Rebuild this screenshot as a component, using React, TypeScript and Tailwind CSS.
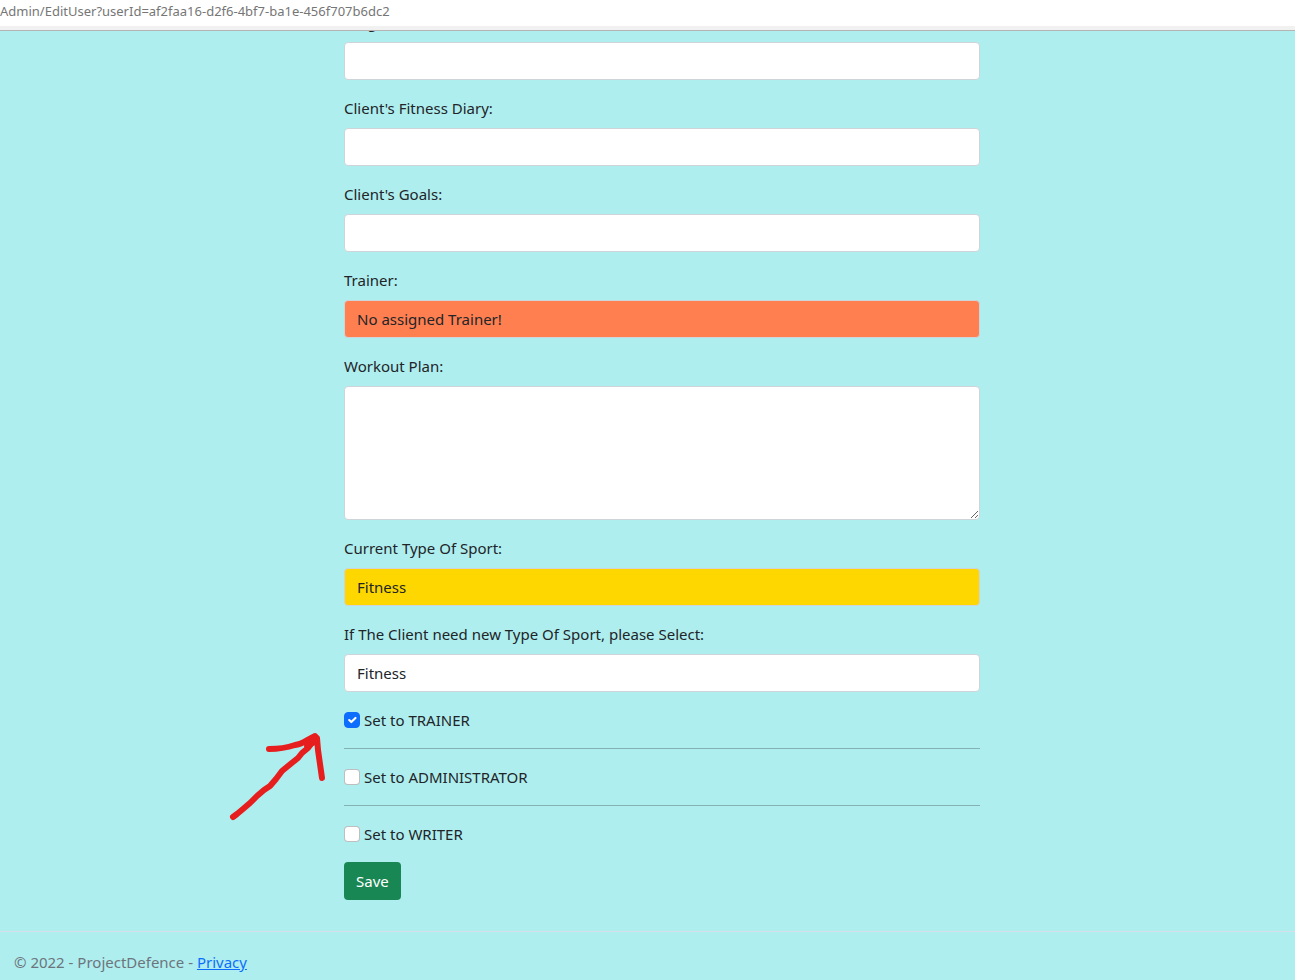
import type { ReactNode } from "react";

const control =
  "block h-[38px] w-full rounded border border-[#ced4da] px-3 text-[#212529] outline-none focus:border-[#86b7fe]";

function Field({ id, label, children }: { id: string; label: string; children: ReactNode }) {
  return (
    <div className="mb-4">
      <label htmlFor={id} className="mb-2 block">
        {label}
      </label>
      {children}
    </div>
  );
}

function Check({ id, label, checked = false }: { id: string; label: string; checked?: boolean }) {
  return (
    <div className="flex items-center gap-1">
      <span className="relative flex">
        <input
          id={id}
          type="checkbox"
          defaultChecked={checked}
          className="peer size-4 appearance-none rounded border border-black/25 bg-white checked:border-[#0d6efd] checked:bg-[#0d6efd]"
        />
        <svg
          viewBox="0 0 20 20"
          className="pointer-events-none absolute inset-px hidden size-[14px] peer-checked:block"
          fill="none"
          stroke="#fff"
          strokeWidth="3"
          strokeLinecap="round"
          strokeLinejoin="round"
        >
          <path d="M6 10l3 3l6-6" />
        </svg>
      </span>
      <label htmlFor={id}>{label}</label>
    </div>
  );
}

export default function App() {
  return (
    <div className="flex min-h-screen flex-col overflow-x-hidden bg-[#afeeee] font-['Noto_Sans','Open_Sans',sans-serif] text-[15px] leading-6 text-[#212529]">
      <header className="h-[31px] border-b border-[#b4b4b4] bg-[#f1f1f1]">
        <div className="h-[26px] overflow-hidden bg-white text-[13px] leading-[23px] whitespace-nowrap text-[#767676]">
          Admin/EditUser?userId=af2faa16-d2f6-4bf7-ba1e-456f707b6dc2
        </div>
      </header>

      <main className="grow overflow-hidden pl-[29px]">
        <form className="mx-auto -mt-[21px] w-full max-w-[636px] pb-[31px]" onSubmit={(e) => e.preventDefault()}>
          <Field id="height" label="Height:">
            <input id="height" className={`${control} bg-white`} />
          </Field>
          <Field id="diary" label="Client's Fitness Diary:">
            <input id="diary" className={`${control} bg-white`} />
          </Field>
          <Field id="goals" label="Client's Goals:">
            <input id="goals" className={`${control} bg-white`} />
          </Field>
          <Field id="trainer" label="Trainer:">
            <input id="trainer" readOnly value="No assigned Trainer!" className={`${control} bg-[#ff7f50]`} />
          </Field>
          <Field id="plan" label="Workout Plan:">
            <textarea
              id="plan"
              className="block h-[134px] w-full resize-y rounded border border-[#ced4da] bg-white px-3 py-1.5 outline-none"
            />
          </Field>
          <Field id="sport" label="Current Type Of Sport:">
            <input id="sport" readOnly value="Fitness" className={`${control} bg-[#ffd700]`} />
          </Field>
          <Field id="new-sport" label="If The Client need new Type Of Sport, please Select:">
            <select id="new-sport" className={`${control} appearance-none bg-white`}>
              <option>Fitness</option>
            </select>
          </Field>

          <div className="relative">
            <Check id="set-trainer" label="Set to TRAINER" checked />
            <hr className="my-4 border-[#212529]/30" />
            <Check id="set-admin" label="Set to ADMINISTRATOR" />
            <hr className="my-4 border-[#212529]/30" />
            <Check id="set-writer" label="Set to WRITER" />
            <svg
              aria-hidden="true"
              viewBox="0 0 100 92"
              className="pointer-events-none absolute top-[22px] right-full mr-4 h-[92px] w-[100px]"
              fill="none"
              stroke="#e61e1e"
              strokeWidth="6"
              strokeLinecap="round"
              strokeLinejoin="round"
            >
              <path d="M5 87L9 84L15 79L22 73L29 66L36 60L42 56L48 49L54 41L65 32L70 28L74 23L80 18L87 9" />
              <path d="M41 19C52 19 58 18 67 15C75 14 78 10 87 6L89 8L90 20L94 48" />
              <path d="M78 16L87 7L87 13Z" fill="#e61e1e" strokeWidth="4" />
            </svg>
          </div>

          <button
            type="submit"
            className="mt-4 block h-[38px] rounded bg-[#198754] px-3 text-white hover:bg-[#157347]"
          >
            Save
          </button>
        </form>
      </main>

      <footer className="border-t border-[#d8deea] px-[14px] pt-[18px] pb-[6px] text-[#6c757d]">
        © 2022 - ProjectDefence -{" "}
        <a href="#privacy" className="text-[#0d6efd] underline">
          Privacy
        </a>
      </footer>
    </div>
  );
}
